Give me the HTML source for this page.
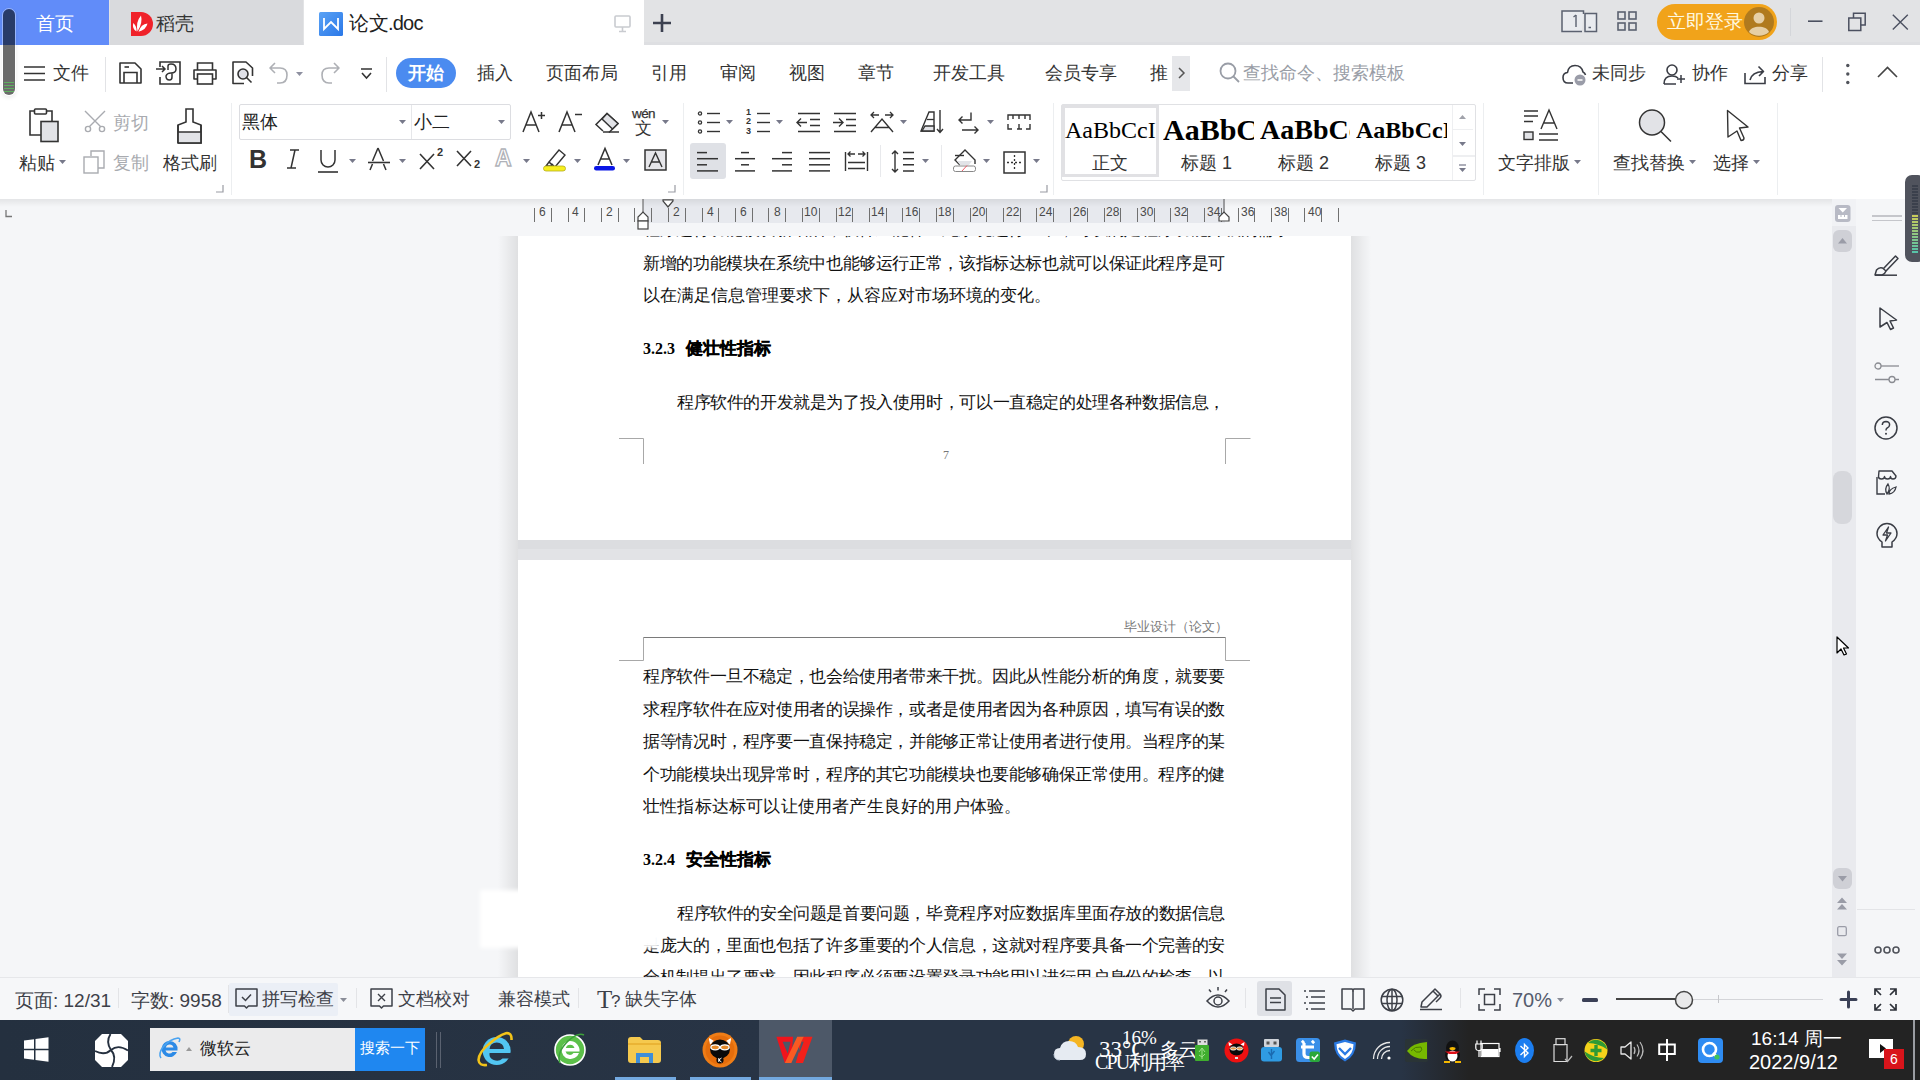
<!DOCTYPE html>
<html><head><meta charset="utf-8"><style>
*{box-sizing:border-box;margin:0;padding:0}
html,body{width:1920px;height:1080px;overflow:hidden;background:#f3f4f7;font-family:"Liberation Sans",sans-serif;color:#333}
.a{position:absolute}
.t{position:absolute;white-space:nowrap;line-height:1}
svg{position:absolute;overflow:visible}
</style></head><body>
<div class="a" style="left:0px;top:0px;width:1920px;height:45px;background:#e2e3e5;"></div>
<div class="a" style="left:0px;top:42px;width:1920px;height:3px;background:#dedfe2;"></div>
<div class="a" style="left:0px;top:0px;width:109px;height:45px;background:#618cf9;"></div>
<div class="t" style="left:36px;top:15px;font-size:18.5px;color:#fff;font-weight:normal;">首页</div>
<div class="a" style="left:110px;top:0px;width:193px;height:45px;background:#d9dadd;"></div>
<svg style="left:129px;top:12px;" width="24" height="24" viewBox="0 0 24 24"><path d="M2 0 H12 A12 12 0 0 1 12 24 H2 Z" fill="#f0222a"/><path d="M8.5 19.5 Q6.5 10 12 3.5 Q14 11 8.5 19.5 Z M7.5 19.5 Q3 17 4.2 11 Q8 14 7.5 19.5 Z M9.5 19.8 Q12 12 18.5 11.5 Q17 18 9.5 19.8 Z" fill="#fff"/></svg>
<div class="t" style="left:156px;top:15px;font-size:18.5px;color:#333;font-weight:normal;">稻壳</div>
<div class="a" style="left:304px;top:0px;width:340px;height:45px;background:#fff;"></div>
<svg style="left:319px;top:12px;" width="24" height="24" viewBox="0 0 24 24"><defs><linearGradient id="wg" x1="0" y1="0" x2="1" y2="1"><stop offset="0" stop-color="#5aa2f5"/><stop offset="1" stop-color="#2a78e8"/></linearGradient></defs><rect width="24" height="24" rx="1.5" fill="url(#wg)"/><path d="M5 6 V17 L12 10 L19 17 V6" fill="none" stroke="#fff" stroke-width="1.8"/></svg>
<div class="t" style="left:349px;top:13px;font-size:20px;color:#222;font-weight:normal;letter-spacing:-0.5px">论文<span style="letter-spacing:-0.8px">.doc</span></div>
<svg style="left:614px;top:15px;" width="18" height="18" viewBox="0 0 18 18"><rect x="1" y="1" width="15" height="11" rx="1" fill="none" stroke="#c9cbd0" stroke-width="1.6"/><path d="M8.5 12 V16 M5 16.5 H12" stroke="#c9cbd0" stroke-width="1.6"/></svg>
<svg style="left:652px;top:13px;" width="20" height="20" viewBox="0 0 20 20"><path d="M10 1 V19 M1 10 H19" stroke="#3c4150" stroke-width="2.6"/></svg>
<svg style="left:1561px;top:10px;" width="37" height="23" viewBox="0 0 37 23"><path d="M21 21.5 H1 V1 H22.5 V4" fill="#e9ebef" stroke="#5b6170" stroke-width="1.5"/><rect x="24" y="3.5" width="11.5" height="18" fill="#e9ebef" stroke="#5b6170" stroke-width="1.5"/><path d="M15 5 V17" stroke="#5b6170" stroke-width="1.4" fill="none"/><path d="M12.5 7 L15 5" stroke="#5b6170" stroke-width="1.2"/><path d="M27.5 17.5 H30" stroke="#5b6170" stroke-width="1.5"/></svg>
<svg style="left:1617px;top:11px;" width="21" height="21" viewBox="0 0 21 21"><rect x="1" y="1" width="7" height="7" fill="none" stroke="#5b6170" stroke-width="1.6"/><rect x="12" y="1" width="7" height="7" fill="none" stroke="#5b6170" stroke-width="1.6"/><rect x="1" y="12" width="7" height="7" fill="none" stroke="#5b6170" stroke-width="1.6"/><rect x="12" y="12" width="7" height="7" fill="none" stroke="#5b6170" stroke-width="1.6"/></svg>
<div class="a" style="left:1657px;top:4px;width:120px;height:36px;background:#f1a31a;border-radius:18px"></div>
<div class="t" style="left:1667px;top:13px;font-size:18.5px;color:#fff9e0;font-weight:normal;">立即登录</div>
<svg style="left:1744px;top:7px;" width="30" height="30" viewBox="0 0 30 30"><circle cx="15" cy="15" r="15" fill="#b07a1e"/><circle cx="15" cy="11" r="5.5" fill="#e6cfa6"/><path d="M5 25 C7 18 23 18 25 25 A15 15 0 0 1 5 25Z" fill="#e6cfa6"/></svg>
<div class="a" style="left:1790px;top:8px;width:1px;height:28px;background:#d4d6da;"></div>
<svg style="left:1808px;top:20px;" width="16" height="3" viewBox="0 0 16 3"><path d="M0 1.2 H14.5" stroke="#4b5060" stroke-width="1.6"/></svg>
<svg style="left:1848px;top:12px;" width="20" height="20" viewBox="0 0 20 20"><rect x="0.8" y="6" width="12" height="12.5" fill="none" stroke="#4b5060" stroke-width="1.5"/><path d="M5.5 6 V1.2 H17.2 V13 H12.8" fill="none" stroke="#4b5060" stroke-width="1.5"/></svg>
<svg style="left:1892px;top:14px;" width="17" height="17" viewBox="0 0 17 17"><path d="M0.8 0.8 L15.8 15.5 M15.8 0.8 L0.8 15.5" stroke="#4b5060" stroke-width="1.4"/></svg>
<div class="a" style="left:0px;top:45px;width:1920px;height:55px;background:#fff;"></div>
<svg style="left:24px;top:66px;" width="22" height="16" viewBox="0 0 22 16"><path d="M0 1 H21 M0 7.5 H21 M0 14 H21" stroke="#333" stroke-width="1.6"/></svg>
<div class="t" style="left:53px;top:64px;font-size:18px;color:#333;font-weight:normal;">文件</div>
<div class="a" style="left:105px;top:57px;width:1px;height:35px;background:#e2e3e6;"></div>
<div class="t" style="left:396px;top:0px;font-size:1px;color:#333;font-weight:normal;"></div>
<div class="a" style="left:396px;top:58px;width:60px;height:30px;background:#4b8bf0;border-radius:15px"></div>
<div class="t" style="left:408px;top:64px;font-size:18px;color:#fff;font-weight:bold;">开始</div>
<div class="t" style="left:477px;top:64px;font-size:18px;color:#333;font-weight:normal;">插入</div>
<div class="t" style="left:546px;top:64px;font-size:18px;color:#333;font-weight:normal;">页面布局</div>
<div class="t" style="left:651px;top:64px;font-size:18px;color:#333;font-weight:normal;">引用</div>
<div class="t" style="left:720px;top:64px;font-size:18px;color:#333;font-weight:normal;">审阅</div>
<div class="t" style="left:789px;top:64px;font-size:18px;color:#333;font-weight:normal;">视图</div>
<div class="t" style="left:858px;top:64px;font-size:18px;color:#333;font-weight:normal;">章节</div>
<div class="t" style="left:933px;top:64px;font-size:18px;color:#333;font-weight:normal;">开发工具</div>
<div class="t" style="left:1045px;top:64px;font-size:18px;color:#333;font-weight:normal;">会员专享</div>
<div class="t" style="left:1150px;top:64px;font-size:18px;color:#333;font-weight:normal;">推</div>
<div class="a" style="left:1172px;top:56px;width:18px;height:35px;background:#e6e7ea;"></div>
<svg style="left:1178px;top:67px;" width="8" height="12" viewBox="0 0 8 12"><path d="M1 1 L6 6 L1 11" fill="none" stroke="#555" stroke-width="1.5"/></svg>
<svg style="left:1219px;top:62px;" width="22" height="22" viewBox="0 0 22 22"><circle cx="9" cy="9" r="7.5" fill="none" stroke="#999da6" stroke-width="1.8"/><path d="M14.5 14.5 L20 20" stroke="#999da6" stroke-width="1.8"/></svg>
<div class="t" style="left:1243px;top:64px;font-size:18px;color:#999da6;font-weight:normal;">查找命令、搜索模板</div>
<div class="t" style="left:1592px;top:64px;font-size:18px;color:#333;font-weight:normal;">未同步</div>
<div class="t" style="left:1692px;top:64px;font-size:18px;color:#333;font-weight:normal;">协作</div>
<div class="t" style="left:1772px;top:64px;font-size:18px;color:#333;font-weight:normal;">分享</div>
<div class="a" style="left:1822px;top:57px;width:1px;height:35px;background:#e2e3e6;"></div>
<svg style="left:119px;top:62px;" width="23" height="22" viewBox="0 0 23 22"><path d="M1 1 H16 L22 7 V21 H1 Z" fill="none" stroke="#333" stroke-width="1.6" stroke-linejoin="round"/><path d="M5 21 V10.5 H18 V21" fill="none" stroke="#333" stroke-width="1.6"/><path d="M5.5 5 H10" stroke="#333" stroke-width="1.6"/></svg>
<svg style="left:156px;top:61px;" width="25" height="24" viewBox="0 0 25 24"><path d="M4 6 V1 H24 V23 H4 V16" fill="none" stroke="#333" stroke-width="1.6"/><path d="M0 8 H9 M6 5 L9 8 L6 11" fill="none" stroke="#333" stroke-width="1.5"/><path d="M12 9 V5 Q12 3 15 3 Q20 3 20 8 Q20 12 15 12 Q11 12 10 15 Q10 19 13.5 19 Q16 19 16 16 V12" fill="none" stroke="#333" stroke-width="1.5"/></svg>
<svg style="left:193px;top:62px;" width="24" height="23" viewBox="0 0 24 23"><path d="M4.5 8 V1 H19.5 V8" fill="none" stroke="#333" stroke-width="1.6"/><path d="M4.5 17 H1 V8 H23 V17 H19.5" fill="none" stroke="#333" stroke-width="1.6" stroke-linejoin="round"/><rect x="4.5" y="12" width="15" height="10" fill="#fff" stroke="#333" stroke-width="1.6"/></svg>
<svg style="left:232px;top:61px;" width="22" height="24" viewBox="0 0 22 24"><path d="M12 22.5 H1 V1 H14 L20.5 7 V15" fill="none" stroke="#333" stroke-width="1.6" stroke-linejoin="round"/><circle cx="11" cy="13" r="5" fill="#e0e1e8" stroke="#333" stroke-width="1.6"/><path d="M14.5 16.5 L19.5 21.5" stroke="#333" stroke-width="1.6"/></svg>
<svg style="left:268px;top:62px;" width="21" height="22" viewBox="0 0 21 22"><path d="M9 21 H12 Q19 21 19 13 Q19 6 12 6 H2 M7 1 L2 6 L7 11" fill="none" stroke="#aeb0b5" stroke-width="1.6" stroke-linejoin="round"/></svg>
<svg style="left:296px;top:72px;" width="8" height="4" viewBox="0 0 8 4"><path d="M0 0 H7 L3.5 4Z" fill="#8e90a0"/></svg>
<svg style="left:320px;top:62px;" width="21" height="22" viewBox="0 0 21 22"><path d="M12 21 H9 Q2 21 2 13 Q2 6 9 6 H19 M14 1 L19 6 L14 11" fill="none" stroke="#aeb0b5" stroke-width="1.6" stroke-linejoin="round"/></svg>
<svg style="left:360px;top:68px;" width="13" height="12" viewBox="0 0 13 12"><path d="M1 1 H12 M2 5 L6.5 10 L11 5" fill="none" stroke="#333" stroke-width="1.6"/></svg>
<div class="a" style="left:386px;top:57px;width:1px;height:35px;background:#e2e3e6;"></div>
<svg style="left:1562px;top:64px;" width="26" height="22" viewBox="0 0 26 22"><path d="M11 19 H6 Q1 19 1 13.5 Q1 9 5.5 8.5 Q6.5 1.5 13 1.5 Q19.5 1.5 21 8 Q23 9 23.5 11" fill="none" stroke="#3a3d45" stroke-width="1.6" stroke-linejoin="round"/><circle cx="18" cy="16" r="5.5" fill="#9a9ca8"/><path d="M15.5 16 H20.5" stroke="#fff" stroke-width="1.5"/></svg>
<svg style="left:1663px;top:64px;" width="23" height="21" viewBox="0 0 23 21"><circle cx="9" cy="6" r="5" fill="none" stroke="#3a3d45" stroke-width="1.6"/><path d="M1 20 Q1 12 9 12 Q13 12 15 14 M1 20 H13" fill="none" stroke="#3a3d45" stroke-width="1.6"/><path d="M18 11 V19 M14 15 H22" stroke="#3a3d45" stroke-width="1.5"/></svg>
<svg style="left:1744px;top:65px;" width="24" height="20" viewBox="0 0 24 20"><path d="M1 8 V18.5 H21 V12" fill="none" stroke="#3a3d45" stroke-width="1.6"/><path d="M6 15 Q8 7 19 6.5 M14.5 1.5 L19.5 6.5 L15 11" fill="none" stroke="#3a3d45" stroke-width="1.6" stroke-linejoin="round"/></svg>
<svg style="left:1845px;top:63px;" width="6" height="22" viewBox="0 0 6 22"><circle cx="2.8" cy="2.5" r="1.7" fill="#50535b"/><circle cx="2.8" cy="11" r="1.7" fill="#50535b"/><circle cx="2.8" cy="19.5" r="1.7" fill="#50535b"/></svg>
<svg style="left:1877px;top:66px;" width="21" height="12" viewBox="0 0 21 12"><path d="M1 11 L10.5 1.5 L20 11" fill="none" stroke="#444" stroke-width="1.6"/></svg>
<div class="a" style="left:0px;top:100px;width:1920px;height:99px;background:#fff;"></div>
<svg style="left:28px;top:108px;" width="32" height="35" viewBox="0 0 32 35"><path d="M13 27 H2 V3 H6" fill="none" stroke="#333" stroke-width="1.6"/><path d="M19 3 H24 V13" fill="none" stroke="#333" stroke-width="1.6"/><rect x="6.5" y="1" width="12" height="5" rx="1" fill="none" stroke="#333" stroke-width="1.6"/><rect x="13" y="13.5" width="17" height="20" fill="#e2e3e7" stroke="#333" stroke-width="1.6"/></svg>
<div class="t" style="left:19px;top:154px;font-size:18px;color:#333;font-weight:normal;">粘贴</div>
<svg style="left:59px;top:160px;" width="8" height="4" viewBox="0 0 8 4"><path d="M0 0 H7 L3.5 4Z" fill="#77798a"/></svg>
<svg style="left:83px;top:110px;" width="25" height="23" viewBox="0 0 25 23"><path d="M2 1 L18 17 M22 1 L6 17" stroke="#a9abb0" stroke-width="1.4"/><circle cx="5" cy="19" r="2.6" fill="#fff" stroke="#a9abb0" stroke-width="1.4"/><circle cx="19" cy="19" r="2.6" fill="#fff" stroke="#a9abb0" stroke-width="1.4"/></svg>
<div class="t" style="left:113px;top:114px;font-size:18px;color:#a9abb0;font-weight:normal;">剪切</div>
<svg style="left:83px;top:150px;" width="23" height="24" viewBox="0 0 23 24"><path d="M8 6 V1 H21 V18 H15" fill="none" stroke="#a9abb0" stroke-width="1.4"/><rect x="1" y="7" width="14" height="16" fill="none" stroke="#a9abb0" stroke-width="1.4"/></svg>
<div class="t" style="left:113px;top:154px;font-size:18px;color:#a9abb0;font-weight:normal;">复制</div>
<svg style="left:176px;top:108px;" width="28" height="36" viewBox="0 0 28 36"><path d="M10 1 H17 V14 L25 17 V35 H2 V17 L10 14 Z" fill="none" stroke="#333" stroke-width="1.6"/><rect x="2.5" y="24" width="22" height="10.5" fill="#e2e3e7"/><path d="M2 24 H25 M2 35 H25 V17 M2 17 V35" fill="none" stroke="#333" stroke-width="1.6"/></svg>
<div class="t" style="left:163px;top:154px;font-size:18px;color:#333;font-weight:normal;">格式刷</div>
<svg style="left:216px;top:185px;" width="8" height="8" viewBox="0 0 8 8"><path d="M7 0 V7 H0" fill="none" stroke="#9a9ca3" stroke-width="1.2"/></svg>
<div class="a" style="left:231px;top:103px;width:1px;height:92px;background:#eceef0;"></div>
<div class="a" style="left:239px;top:104px;width:272px;height:36px;background:#fff;border:1px solid #dcdde1;border-radius:2px"></div>
<div class="a" style="left:411px;top:105px;width:1px;height:34px;background:#e6e7ea;"></div>
<div class="t" style="left:242px;top:113px;font-size:18px;color:#222;font-weight:normal;">黑体</div>
<svg style="left:399px;top:120px;" width="8" height="4" viewBox="0 0 8 4"><path d="M0 0 H7 L3.5 4Z" fill="#77798a"/></svg>
<div class="t" style="left:414px;top:113px;font-size:18px;color:#222;font-weight:normal;">小二</div>
<svg style="left:498px;top:120px;" width="8" height="4" viewBox="0 0 8 4"><path d="M0 0 H7 L3.5 4Z" fill="#77798a"/></svg>
<svg style="left:522px;top:111px;" width="24" height="22" viewBox="0 0 24 22"><path d="M1 21 L9 1 L17 21 M4 14 H14" fill="none" stroke="#333" stroke-width="1.5"/><path d="M16 4.5 H23 M19.5 1 V8" stroke="#333" stroke-width="1.5"/></svg>
<svg style="left:558px;top:111px;" width="25" height="22" viewBox="0 0 25 22"><path d="M1 21 L9 1 L17 21 M4 14 H14" fill="none" stroke="#333" stroke-width="1.5"/><path d="M17 3.5 H24" stroke="#333" stroke-width="1.5"/></svg>
<svg style="left:595px;top:112px;" width="25" height="21" viewBox="0 0 25 21"><path d="M8 19 L1 12.5 L12 1.5 L23 11.5 L14 20.5" fill="#fff" stroke="#333" stroke-width="1.5"/><path d="M7 7 L12 1.5 L23 11.5 L17.5 17 Z" fill="#e2e3e7" stroke="#333" stroke-width="1.5"/><path d="M8 20 H24" stroke="#333" stroke-width="1.5"/></svg>
<div class="t" style="left:632px;top:107px;font-size:13.5px;color:#333;font-weight:normal;letter-spacing:-0.6px;-webkit-text-stroke:0.25px #333">wén</div>
<div class="t" style="left:635px;top:120px;font-size:17px;color:#333;font-weight:normal;">文</div>
<svg style="left:662px;top:120px;" width="8" height="4" viewBox="0 0 8 4"><path d="M0 0 H7 L3.5 4Z" fill="#77798a"/></svg>
<div class="t" style="left:249px;top:147px;font-size:25px;color:#333;font-weight:bold;">B</div>
<svg style="left:286px;top:149px;" width="14" height="20" viewBox="0 0 14 20"><path d="M4 1 H13 M1 19 H10 M9 1 L5 19" stroke="#333" stroke-width="1.5"/></svg>
<svg style="left:318px;top:149px;" width="24" height="24" viewBox="0 0 24 24"><path d="M3 1 V11 A7 7 0 0 0 17 11 V1" fill="none" stroke="#333" stroke-width="1.5"/><path d="M0 23 H20" stroke="#333" stroke-width="1.6"/></svg>
<svg style="left:349px;top:159px;" width="8" height="4" viewBox="0 0 8 4"><path d="M0 0 H7 L3.5 4Z" fill="#77798a"/></svg>
<svg style="left:368px;top:147px;" width="24" height="24" viewBox="0 0 24 24"><path d="M2 23 L4.5 17 M10 1 L4.5 14 M10 1 L15.5 14 M15.5 17 L18 23" fill="none" stroke="#333" stroke-width="1.5"/><path d="M0 15.5 H22" stroke="#333" stroke-width="1.6"/></svg>
<svg style="left:399px;top:159px;" width="8" height="4" viewBox="0 0 8 4"><path d="M0 0 H7 L3.5 4Z" fill="#77798a"/></svg>
<svg style="left:419px;top:148px;" width="26" height="22" viewBox="0 0 26 22"><path d="M1 6 L15 21 M15 6 L1 21" stroke="#333" stroke-width="1.6"/></svg>
<div class="t" style="left:437px;top:147px;font-size:11px;color:#333;font-weight:bold;">2</div>
<svg style="left:456px;top:148px;" width="26" height="22" viewBox="0 0 26 22"><path d="M1 3 L15 18 M15 3 L1 18" stroke="#333" stroke-width="1.6"/></svg>
<div class="t" style="left:474px;top:159px;font-size:11px;color:#333;font-weight:bold;">2</div>
<div class="t" style="left:495px;top:147px;font-size:23px;color:#fff;font-weight:bold;-webkit-text-stroke:1.3px #b0b2b8">A</div>
<svg style="left:523px;top:159px;" width="8" height="4" viewBox="0 0 8 4"><path d="M0 0 H7 L3.5 4Z" fill="#77798a"/></svg>
<svg style="left:543px;top:148px;" width="24" height="23" viewBox="0 0 24 23"><path d="M6 14 L16 2 L22 7 L12 19 Z M6 14 L9 17 M6 14 L3 18 L8 18 L10 16" fill="#fff" stroke="#333" stroke-width="1.4"/><rect x="0.5" y="18" width="22" height="5" rx="2.5" fill="#f7ef1c" stroke="#b5ad20" stroke-width="0.8"/></svg>
<svg style="left:574px;top:159px;" width="8" height="4" viewBox="0 0 8 4"><path d="M0 0 H7 L3.5 4Z" fill="#77798a"/></svg>
<svg style="left:594px;top:148px;" width="22" height="23" viewBox="0 0 22 23"><path d="M4 17 L11 0.5 L18 17 M6.5 11 H15.5" fill="none" stroke="#333" stroke-width="1.5"/><rect x="0" y="18" width="21" height="4.5" rx="2.2" fill="#0a16e6"/></svg>
<svg style="left:623px;top:159px;" width="8" height="4" viewBox="0 0 8 4"><path d="M0 0 H7 L3.5 4Z" fill="#77798a"/></svg>
<svg style="left:644px;top:149px;" width="23" height="22" viewBox="0 0 23 22"><rect x="1" y="1" width="21" height="20" fill="#e6e6ea" stroke="#333" stroke-width="1.5"/><path d="M5 18 L11.5 4 L18 18 M7.5 13 H15.5" fill="none" stroke="#333" stroke-width="1.4"/></svg>
<svg style="left:668px;top:185px;" width="8" height="8" viewBox="0 0 8 8"><path d="M7 0 V7 H0" fill="none" stroke="#9a9ca3" stroke-width="1.2"/></svg>
<div class="a" style="left:683px;top:103px;width:1px;height:92px;background:#eceef0;"></div>
<svg style="left:697px;top:110px;" width="26" height="26" viewBox="0 0 26 26"><circle cx="3" cy="3.5" r="1.6" fill="none" stroke="#333" stroke-width="1.3"/><path d="M10 3.5 H23" stroke="#333" stroke-width="1.4"/><circle cx="3" cy="12.5" r="1.6" fill="none" stroke="#333" stroke-width="1.3"/><path d="M10 12.5 H23" stroke="#333" stroke-width="1.4"/><circle cx="3" cy="21.5" r="1.6" fill="none" stroke="#333" stroke-width="1.3"/><path d="M10 21.5 H23" stroke="#333" stroke-width="1.4"/></svg>
<svg style="left:726px;top:120px;" width="8" height="4" viewBox="0 0 8 4"><path d="M0 0 H7 L3.5 4Z" fill="#77798a"/></svg>
<div class="t" style="left:746px;top:108px;font-size:9px;color:#333;font-weight:bold;line-height:9.3px">1<br>2<br>3</div>
<svg style="left:756px;top:110px;" width="16" height="26" viewBox="0 0 16 26"><path d="M1 3.5 H14" stroke="#333" stroke-width="1.4"/><path d="M1 12.5 H14" stroke="#333" stroke-width="1.4"/><path d="M1 21.5 H14" stroke="#333" stroke-width="1.4"/></svg>
<svg style="left:776px;top:120px;" width="8" height="4" viewBox="0 0 8 4"><path d="M0 0 H7 L3.5 4Z" fill="#77798a"/></svg>
<svg style="left:796px;top:112px;" width="26" height="22" viewBox="0 0 26 22"><path d="M2 1.5 H24 M14 7.5 H24 M14 13.5 H24 M2 19.5 H24" stroke="#333" stroke-width="1.4"/><path d="M11 10.5 H1 M5 6.5 L1 10.5 L5 14.5" fill="none" stroke="#333" stroke-width="1.4"/></svg>
<svg style="left:833px;top:112px;" width="26" height="22" viewBox="0 0 26 22"><path d="M1 1.5 H23 M13 7.5 H23 M13 13.5 H23 M1 19.5 H23" stroke="#333" stroke-width="1.4"/><path d="M0 10.5 H10 M6 6.5 L10 10.5 L6 14.5" fill="none" stroke="#333" stroke-width="1.4"/></svg>
<svg style="left:870px;top:111px;" width="25" height="22" viewBox="0 0 25 22"><path d="M1 21 L12 8 L23 21 M5 16.5 H19" fill="none" stroke="#333" stroke-width="1.4"/><path d="M1 4 H9 M4 1 L1 4 L4 7 M15 4 H23 M20 1 L23 4 L20 7" fill="none" stroke="#333" stroke-width="1.3"/></svg>
<svg style="left:900px;top:120px;" width="8" height="4" viewBox="0 0 8 4"><path d="M0 0 H7 L3.5 4Z" fill="#77798a"/></svg>
<svg style="left:920px;top:110px;" width="25" height="24" viewBox="0 0 25 24"><path d="M1 21 L9 2 H14 V21 Z" fill="none" stroke="#333" stroke-width="1.4"/><path d="M5 16 H14 V21 H2 Z" fill="#e2e3e7" stroke="#333" stroke-width="1.3"/><path d="M7 9.5 H14" stroke="#333" stroke-width="1.3"/><path d="M20 0 V22 M17 19 L20 22.5 L23 19" fill="none" stroke="#333" stroke-width="1.4"/></svg>
<svg style="left:958px;top:112px;" width="23" height="22" viewBox="0 0 23 22"><path d="M13 0.5 V8 H1 M4.5 4.5 L1 8 L4.5 11.5" fill="none" stroke="#333" stroke-width="1.4"/><path d="M4 18 H20 M16.5 14.5 L20 18 L16.5 21.5" fill="none" stroke="#333" stroke-width="1.4"/></svg>
<svg style="left:987px;top:120px;" width="8" height="4" viewBox="0 0 8 4"><path d="M0 0 H7 L3.5 4Z" fill="#77798a"/></svg>
<svg style="left:1007px;top:114px;" width="25" height="16" viewBox="0 0 25 16"><path d="M1 6 V1 H23 V6 M1 10 V15 H5 M10 15 H15 M19 15 H23 V10 M12 10 V15 M6 1 V5 M12 1 V5 M18 1 V5" fill="none" stroke="#333" stroke-width="1.4"/></svg>
<div class="a" style="left:690px;top:143px;width:36px;height:36px;background:#dfe1e6;border-radius:3px"></div>
<svg style="left:697px;top:150px;" width="23" height="24" viewBox="0 0 23 24"><path d="M0 2.6 H10" stroke="#333" stroke-width="1.5"/><path d="M0 8.7 H21" stroke="#333" stroke-width="1.5"/><path d="M0 14.799999999999999 H10" stroke="#333" stroke-width="1.5"/><path d="M0 20.9 H21" stroke="#333" stroke-width="1.5"/></svg>
<svg style="left:735px;top:150px;" width="23" height="24" viewBox="0 0 23 24"><path d="M6 2.6 H14" stroke="#333" stroke-width="1.5"/><path d="M0 8.7 H20" stroke="#333" stroke-width="1.5"/><path d="M6 14.799999999999999 H14" stroke="#333" stroke-width="1.5"/><path d="M0 20.9 H20" stroke="#333" stroke-width="1.5"/></svg>
<svg style="left:772px;top:150px;" width="23" height="24" viewBox="0 0 23 24"><path d="M10 2.6 H20" stroke="#333" stroke-width="1.5"/><path d="M0 8.7 H20" stroke="#333" stroke-width="1.5"/><path d="M10 14.799999999999999 H20" stroke="#333" stroke-width="1.5"/><path d="M0 20.9 H20" stroke="#333" stroke-width="1.5"/></svg>
<svg style="left:809px;top:150px;" width="23" height="24" viewBox="0 0 23 24"><path d="M0 2.6 H21" stroke="#333" stroke-width="1.5"/><path d="M0 8.7 H21" stroke="#333" stroke-width="1.5"/><path d="M0 14.799999999999999 H21" stroke="#333" stroke-width="1.5"/><path d="M0 20.9 H21" stroke="#333" stroke-width="1.5"/></svg>
<svg style="left:844px;top:150px;" width="26" height="23" viewBox="0 0 26 23"><path d="M1.5 2 V21 M23.5 2 V21 M4 12.5 H21 M4 18.5 H21" stroke="#333" stroke-width="1.4"/><path d="M4 4 H11 M6.5 1.5 L4 4 L6.5 6.5 M14 4 H21 M18.5 1.5 L21 4 L18.5 6.5" fill="none" stroke="#333" stroke-width="1.3"/></svg>
<div class="a" style="left:880px;top:145px;width:1px;height:32px;background:#e8e9ec;"></div>
<svg style="left:891px;top:150px;" width="25" height="24" viewBox="0 0 25 24"><path d="M4 1 V22 M1 4 L4 1 L7 4 M1 19 L4 22 L7 19" fill="none" stroke="#333" stroke-width="1.4"/><path d="M12 2.6 H23 M12 8.7 H23 M12 14.8 H23 M12 20.9 H23" stroke="#333" stroke-width="1.5"/></svg>
<svg style="left:922px;top:159px;" width="8" height="4" viewBox="0 0 8 4"><path d="M0 0 H7 L3.5 4Z" fill="#77798a"/></svg>
<div class="a" style="left:941px;top:145px;width:1px;height:32px;background:#e8e9ec;"></div>
<svg style="left:953px;top:149px;" width="24" height="24" viewBox="0 0 24 24"><path d="M7 16 L2 11 L12 1 L22 11 V15" fill="none" stroke="#333" stroke-width="1.4"/><path d="M4 12 L7 16 H16 L19 12 Z" fill="#e2e3e7"/><path d="M2 6.5 H11" stroke="#333" stroke-width="1.4"/><rect x="0.5" y="17" width="22" height="5.5" rx="2" fill="#fff" stroke="#888" stroke-width="1"/><path d="M9 22 L14 16.5" stroke="#e34" stroke-width="0.8"/></svg>
<svg style="left:983px;top:159px;" width="8" height="4" viewBox="0 0 8 4"><path d="M0 0 H7 L3.5 4Z" fill="#77798a"/></svg>
<svg style="left:1003px;top:151px;" width="23" height="23" viewBox="0 0 23 23"><rect x="1" y="1" width="21" height="21" fill="none" stroke="#333" stroke-width="1.5"/><path d="M11.5 4 V19 M4 11.5 H19" stroke="#333" stroke-width="1.3" stroke-dasharray="2 2"/></svg>
<svg style="left:1033px;top:159px;" width="8" height="4" viewBox="0 0 8 4"><path d="M0 0 H7 L3.5 4Z" fill="#77798a"/></svg>
<svg style="left:1040px;top:185px;" width="8" height="8" viewBox="0 0 8 8"><path d="M7 0 V7 H0" fill="none" stroke="#9a9ca3" stroke-width="1.2"/></svg>
<div class="a" style="left:1053px;top:103px;width:1px;height:92px;background:#eceef0;"></div>
<div class="a" style="left:1061px;top:104px;width:415px;height:77px;background:#fff;border:1px solid #e0e1e4;border-radius:2px"></div>
<div class="a" style="left:1062px;top:105px;width:97px;height:72px;background:#fff;border:3px solid #e1e1e4"></div>
<div class="a" style="left:1065px;top:112px;width:92px;height:34px;overflow:hidden"><div class="t" style="left:0;top:5.5px;font-family:'Liberation Serif',serif;font-size:24px;color:#000">AaBbCcI</div></div>
<div class="t" style="left:1092px;top:154px;font-size:18px;color:#333;font-weight:normal;">正文</div>
<div class="a" style="left:1163px;top:110px;width:91px;height:38px;overflow:hidden"><div class="t" style="left:0;top:5px;font-family:'Liberation Serif',serif;font-size:30px;font-weight:bold;color:#000">AaBbCc</div></div>
<div class="t" style="left:1181px;top:154px;font-size:18px;color:#333;font-weight:normal;">标题 1</div>
<div class="a" style="left:1260px;top:112px;width:90px;height:36px;overflow:hidden"><div class="t" style="left:0;top:4px;font-family:'Liberation Serif',serif;font-size:28px;font-weight:bold;color:#000">AaBbCc</div></div>
<div class="t" style="left:1278px;top:154px;font-size:18px;color:#333;font-weight:normal;">标题 2</div>
<div class="a" style="left:1356px;top:114px;width:91px;height:32px;overflow:hidden"><div class="t" style="left:0;top:4px;font-family:'Liberation Serif',serif;font-size:24px;font-weight:bold;color:#000">AaBbCcI</div></div>
<div class="t" style="left:1375px;top:154px;font-size:18px;color:#333;font-weight:normal;">标题 3</div>
<div class="a" style="left:1452px;top:105px;width:1px;height:75px;background:#eeeff1;"></div>
<div class="a" style="left:1453px;top:129px;width:20px;height:1px;background:#eeeff1;"></div>
<div class="a" style="left:1453px;top:155px;width:22px;height:2px;background:#eeeff1;"></div>
<svg style="left:1459px;top:115px;" width="8" height="4" viewBox="0 0 8 4"><path d="M0 4 H7 L3.5 0Z" fill="#a0a2aa"/></svg>
<svg style="left:1459px;top:142px;" width="8" height="4" viewBox="0 0 8 4"><path d="M0 0 H7 L3.5 4Z" fill="#77798a"/></svg>
<svg style="left:1459px;top:164px;" width="8" height="9" viewBox="0 0 8 9"><path d="M0 1 H7" stroke="#77798a" stroke-width="1.2"/><path d="M0 4 H7 L3.5 8Z" fill="#77798a"/></svg>
<div class="a" style="left:1483px;top:103px;width:1px;height:92px;background:#eceef0;"></div>
<svg style="left:1523px;top:109px;" width="36" height="33" viewBox="0 0 36 33"><path d="M1 2 H15 M1 7 H15 M1 12.5 H10" stroke="#333" stroke-width="1.4"/><path d="M18 20 L26 1 L34 20 M20.5 14 H31.5" fill="none" stroke="#333" stroke-width="1.4"/><rect x="1" y="23" width="9" height="7.5" fill="#e2e3e7" stroke="#333" stroke-width="1.4"/><path d="M16 25 H35 M16 31 H35" stroke="#333" stroke-width="1.4"/></svg>
<div class="t" style="left:1498px;top:154px;font-size:18px;color:#333;font-weight:normal;">文字排版</div>
<svg style="left:1574px;top:160px;" width="8" height="4" viewBox="0 0 8 4"><path d="M0 0 H7 L3.5 4Z" fill="#77798a"/></svg>
<div class="a" style="left:1598px;top:103px;width:1px;height:92px;background:#eceef0;"></div>
<svg style="left:1637px;top:108px;" width="36" height="36" viewBox="0 0 36 36"><circle cx="15" cy="14.5" r="12.5" fill="#e2e3e7" stroke="#333" stroke-width="1.5"/><path d="M24 23.5 L34 33.5" stroke="#333" stroke-width="1.5"/></svg>
<div class="t" style="left:1613px;top:154px;font-size:18px;color:#333;font-weight:normal;">查找替换</div>
<svg style="left:1689px;top:160px;" width="8" height="4" viewBox="0 0 8 4"><path d="M0 0 H7 L3.5 4Z" fill="#77798a"/></svg>
<svg style="left:1726px;top:109px;" width="25" height="34" viewBox="0 0 25 34"><path d="M1.5 1.5 L22 18 L13.5 19 L18 29 Q18 31.5 15 31.5 L11 22 L2 28 Z" fill="#fff" stroke="#333" stroke-width="1.4" stroke-linejoin="round"/></svg>
<div class="t" style="left:1713px;top:154px;font-size:18px;color:#333;font-weight:normal;">选择</div>
<svg style="left:1753px;top:160px;" width="8" height="4" viewBox="0 0 8 4"><path d="M0 0 H7 L3.5 4Z" fill="#77798a"/></svg>
<div class="a" style="left:1777px;top:103px;width:1px;height:92px;background:#eceef0;"></div>
<div class="a" style="left:0px;top:199px;width:1832px;height:779px;background:#f5f6f8;"></div>
<div class="a" style="left:643px;top:199px;width:582px;height:24px;background:#e7e9ee;"></div>
<div class="a" style="left:0;top:199px;width:1832px;height:8px;background:linear-gradient(rgba(0,0,0,0.07),rgba(245,246,248,0))"></div>
<svg style="left:5px;top:210px;" width="8" height="8" viewBox="0 0 8 8"><path d="M1 0 V6.5 H7" fill="none" stroke="#777" stroke-width="1.3"/></svg>
<svg style="left:0;top:199px" width="1832" height="35" viewBox="0 0 1832 35"><path d="M534.5 9 V23" stroke="#707070" stroke-width="1"/><path d="M551.5 9 V23" stroke="#707070" stroke-width="1"/><path d="M568.5 9 V23" stroke="#707070" stroke-width="1"/><path d="M584.5 9 V23" stroke="#707070" stroke-width="1"/><path d="M601.5 9 V23" stroke="#707070" stroke-width="1"/><path d="M618.5 9 V23" stroke="#707070" stroke-width="1"/><path d="M634.5 9 V23" stroke="#707070" stroke-width="1"/><path d="M651.5 9 V23" stroke="#707070" stroke-width="1"/><path d="M668.5 9 V23" stroke="#707070" stroke-width="1"/><path d="M685.5 9 V23" stroke="#707070" stroke-width="1"/><path d="M702.5 9 V23" stroke="#707070" stroke-width="1"/><path d="M718.5 9 V23" stroke="#707070" stroke-width="1"/><path d="M735.5 9 V23" stroke="#707070" stroke-width="1"/><path d="M752.5 9 V23" stroke="#707070" stroke-width="1"/><path d="M768.5 9 V23" stroke="#707070" stroke-width="1"/><path d="M785.5 9 V23" stroke="#707070" stroke-width="1"/><path d="M802.5 9 V23" stroke="#707070" stroke-width="1"/><path d="M819.5 9 V23" stroke="#707070" stroke-width="1"/><path d="M836.5 9 V23" stroke="#707070" stroke-width="1"/><path d="M852.5 9 V23" stroke="#707070" stroke-width="1"/><path d="M869.5 9 V23" stroke="#707070" stroke-width="1"/><path d="M886.5 9 V23" stroke="#707070" stroke-width="1"/><path d="M902.5 9 V23" stroke="#707070" stroke-width="1"/><path d="M919.5 9 V23" stroke="#707070" stroke-width="1"/><path d="M936.5 9 V23" stroke="#707070" stroke-width="1"/><path d="M953.5 9 V23" stroke="#707070" stroke-width="1"/><path d="M970.5 9 V23" stroke="#707070" stroke-width="1"/><path d="M986.5 9 V23" stroke="#707070" stroke-width="1"/><path d="M1003.5 9 V23" stroke="#707070" stroke-width="1"/><path d="M1020.5 9 V23" stroke="#707070" stroke-width="1"/><path d="M1036.5 9 V23" stroke="#707070" stroke-width="1"/><path d="M1053.5 9 V23" stroke="#707070" stroke-width="1"/><path d="M1070.5 9 V23" stroke="#707070" stroke-width="1"/><path d="M1087.5 9 V23" stroke="#707070" stroke-width="1"/><path d="M1104.5 9 V23" stroke="#707070" stroke-width="1"/><path d="M1120.5 9 V23" stroke="#707070" stroke-width="1"/><path d="M1137.5 9 V23" stroke="#707070" stroke-width="1"/><path d="M1154.5 9 V23" stroke="#707070" stroke-width="1"/><path d="M1170.5 9 V23" stroke="#707070" stroke-width="1"/><path d="M1187.5 9 V23" stroke="#707070" stroke-width="1"/><path d="M1204.5 9 V23" stroke="#707070" stroke-width="1"/><path d="M1221.5 9 V23" stroke="#707070" stroke-width="1"/><path d="M1238.5 9 V23" stroke="#707070" stroke-width="1"/><path d="M1254.5 9 V23" stroke="#707070" stroke-width="1"/><path d="M1271.5 9 V23" stroke="#707070" stroke-width="1"/><path d="M1288.5 9 V23" stroke="#707070" stroke-width="1"/><path d="M1304.5 9 V23" stroke="#707070" stroke-width="1"/><path d="M1321.5 9 V23" stroke="#707070" stroke-width="1"/><path d="M1338.5 9 V23" stroke="#707070" stroke-width="1"/></svg>
<div class="t" style="left:539px;top:206px;font-size:12px;color:#4a4a4a;font-weight:normal;">6</div>
<div class="t" style="left:572px;top:206px;font-size:12px;color:#4a4a4a;font-weight:normal;">4</div>
<div class="t" style="left:606px;top:206px;font-size:12px;color:#4a4a4a;font-weight:normal;">2</div>
<div class="t" style="left:673px;top:206px;font-size:12px;color:#4a4a4a;font-weight:normal;">2</div>
<div class="t" style="left:707px;top:206px;font-size:12px;color:#4a4a4a;font-weight:normal;">4</div>
<div class="t" style="left:740px;top:206px;font-size:12px;color:#4a4a4a;font-weight:normal;">6</div>
<div class="t" style="left:774px;top:206px;font-size:12px;color:#4a4a4a;font-weight:normal;">8</div>
<div class="t" style="left:804px;top:206px;font-size:12px;color:#4a4a4a;font-weight:normal;">10</div>
<div class="t" style="left:838px;top:206px;font-size:12px;color:#4a4a4a;font-weight:normal;">12</div>
<div class="t" style="left:871px;top:206px;font-size:12px;color:#4a4a4a;font-weight:normal;">14</div>
<div class="t" style="left:905px;top:206px;font-size:12px;color:#4a4a4a;font-weight:normal;">16</div>
<div class="t" style="left:938px;top:206px;font-size:12px;color:#4a4a4a;font-weight:normal;">18</div>
<div class="t" style="left:972px;top:206px;font-size:12px;color:#4a4a4a;font-weight:normal;">20</div>
<div class="t" style="left:1006px;top:206px;font-size:12px;color:#4a4a4a;font-weight:normal;">22</div>
<div class="t" style="left:1039px;top:206px;font-size:12px;color:#4a4a4a;font-weight:normal;">24</div>
<div class="t" style="left:1073px;top:206px;font-size:12px;color:#4a4a4a;font-weight:normal;">26</div>
<div class="t" style="left:1106px;top:206px;font-size:12px;color:#4a4a4a;font-weight:normal;">28</div>
<div class="t" style="left:1140px;top:206px;font-size:12px;color:#4a4a4a;font-weight:normal;">30</div>
<div class="t" style="left:1174px;top:206px;font-size:12px;color:#4a4a4a;font-weight:normal;">32</div>
<div class="t" style="left:1207px;top:206px;font-size:12px;color:#4a4a4a;font-weight:normal;">34</div>
<div class="t" style="left:1241px;top:206px;font-size:12px;color:#4a4a4a;font-weight:normal;">36</div>
<div class="t" style="left:1274px;top:206px;font-size:12px;color:#4a4a4a;font-weight:normal;">38</div>
<div class="t" style="left:1308px;top:206px;font-size:12px;color:#4a4a4a;font-weight:normal;">40</div>
<svg style="left:637px;top:199px;" width="14" height="33" viewBox="0 0 14 33"><path d="M6 0 V13" stroke="#555" stroke-width="1"/><path d="M1 22 V18 L6 13 L11 18 V22 Z" fill="#fff" stroke="#444" stroke-width="1.2"/><rect x="1" y="22" width="10" height="8" fill="#fff" stroke="#444" stroke-width="1.2"/></svg>
<svg style="left:662px;top:199px;" width="13" height="10" viewBox="0 0 13 10"><path d="M1 0.8 H11 V2 L6 8 L1 2 Z" fill="#fff" stroke="#444" stroke-width="1.2"/></svg>
<svg style="left:1218px;top:199px;" width="14" height="25" viewBox="0 0 14 25"><path d="M6 0 V13" stroke="#555" stroke-width="1"/><path d="M1 22 V18 L6 13 L11 18 V22 Z" fill="#fff" stroke="#444" stroke-width="1.2"/></svg>
<div class="a" style="left:498px;top:236px;width:20px;height:742px;background:linear-gradient(to right,rgba(0,0,0,0),rgba(0,0,0,0.09))"></div>
<div class="a" style="left:1351px;top:236px;width:20px;height:742px;background:linear-gradient(to left,rgba(0,0,0,0),rgba(0,0,0,0.09))"></div>
<div class="a" style="left:518px;top:236px;width:833px;height:304px;background:#fff;"></div>
<div class="a" style="left:518px;top:540px;width:833px;height:9px;background:#dcdde0;"></div>
<div class="a" style="left:518px;top:549px;width:833px;height:11px;background:#e2e3e6;"></div>
<div class="a" style="left:518px;top:560px;width:833px;height:418px;background:#fff;"></div>
<div class="a" style="left:518px;top:236px;width:833px;height:304px;overflow:hidden">
<div class="t" style="left:125px;top:-15px;width:582px;font-size:17px;color:#111;font-family:'Liberation Serif',serif;text-align:justify;text-align-last:justify;letter-spacing:-0.4px">程序运行功能模块新增后，软件应能保证此系统运行正常，可以满足程序功能升级的需求</div>
</div>
<div class="t" style="left:643px;top:255px;width:582px;font-size:17px;color:#111;font-weight:normal;letter-spacing:-0.4px;font-family:'Liberation Serif',serif;text-align:justify;text-align-last:justify;">新增的功能模块在系统中也能够运行正常，该指标达标也就可以保证此程序是可</div>
<div class="t" style="left:643px;top:287px;width:582px;font-size:17px;color:#111;font-weight:normal;letter-spacing:0px;font-family:'Liberation Serif',serif;">以在满足信息管理要求下，从容应对市场环境的变化。</div>
<div class="t" style="left:643px;top:341px;width:582px;font-size:16.5px;color:#000;font-weight:bold;letter-spacing:0px;font-family:'Liberation Serif',serif;"><span style="font-size:16px">3.2.3</span><span style="margin-left:10.5px;-webkit-text-stroke:0.3px #000">健壮性指标</span></div>
<div class="t" style="left:677px;top:394px;width:548px;font-size:17px;color:#111;font-weight:normal;letter-spacing:-0.4px;font-family:'Liberation Serif',serif;text-align:justify;text-align-last:justify;">程序软件的开发就是为了投入使用时，可以一直稳定的处理各种数据信息，</div>
<svg style="left:618px;top:437px;" width="28" height="28" viewBox="0 0 28 28"><path d="M1 1.5 H25.5 V27" fill="none" stroke="#a8a8a8" stroke-width="1"/></svg>
<svg style="left:1224px;top:437px;" width="28" height="28" viewBox="0 0 28 28"><path d="M26.5 1.5 H1.5 V27" fill="none" stroke="#a8a8a8" stroke-width="1"/></svg>
<div class="t" style="left:943px;top:449px;font-size:12px;color:#777;font-weight:normal;font-family:'Liberation Serif',serif;">7</div>
<div class="t" style="left:1124px;top:620px;font-size:13px;color:#7a7a7a;font-weight:normal;">毕业设计（论文）</div>
<div class="a" style="left:643px;top:637px;width:582px;height:1px;background:#7a7a7a;"></div>
<svg style="left:618px;top:637px;" width="28" height="25" viewBox="0 0 28 25"><path d="M25.5 0 V23.5 H1" fill="none" stroke="#a8a8a8" stroke-width="1"/></svg>
<svg style="left:1224px;top:637px;" width="28" height="25" viewBox="0 0 28 25"><path d="M1.5 0 V23.5 H26" fill="none" stroke="#a8a8a8" stroke-width="1"/></svg>
<div class="t" style="left:643px;top:668.0px;width:582px;font-size:17px;color:#111;font-weight:normal;letter-spacing:-0.4px;font-family:'Liberation Serif',serif;text-align:justify;text-align-last:justify;">程序软件一旦不稳定，也会给使用者带来干扰。因此从性能分析的角度，就要要</div>
<div class="t" style="left:643px;top:700.6px;width:582px;font-size:17px;color:#111;font-weight:normal;letter-spacing:-0.4px;font-family:'Liberation Serif',serif;text-align:justify;text-align-last:justify;">求程序软件在应对使用者的误操作，或者是使用者因为各种原因，填写有误的数</div>
<div class="t" style="left:643px;top:733.2px;width:582px;font-size:17px;color:#111;font-weight:normal;letter-spacing:-0.4px;font-family:'Liberation Serif',serif;text-align:justify;text-align-last:justify;">据等情况时，程序要一直保持稳定，并能够正常让使用者进行使用。当程序的某</div>
<div class="t" style="left:643px;top:765.8px;width:582px;font-size:17px;color:#111;font-weight:normal;letter-spacing:-0.4px;font-family:'Liberation Serif',serif;text-align:justify;text-align-last:justify;">个功能模块出现异常时，程序的其它功能模块也要能够确保正常使用。程序的健</div>
<div class="t" style="left:643px;top:798.4px;width:582px;font-size:17px;color:#111;font-weight:normal;letter-spacing:0.2px;font-family:'Liberation Serif',serif;">壮性指标达标可以让使用者产生良好的用户体验。</div>
<div class="t" style="left:643px;top:852px;width:582px;font-size:16.5px;color:#000;font-weight:bold;letter-spacing:0px;font-family:'Liberation Serif',serif;"><span style="font-size:16px">3.2.4</span><span style="margin-left:10.5px;-webkit-text-stroke:0.3px #000">安全性指标</span></div>
<div class="a" style="left:518px;top:560px;width:833px;height:418px;overflow:hidden">
<div class="t" style="left:159px;top:345px;width:548px;font-size:17px;color:#111;font-family:'Liberation Serif',serif;text-align:justify;text-align-last:justify;letter-spacing:-0.4px">程序软件的安全问题是首要问题，毕竟程序对应数据库里面存放的数据信息</div>
<div class="t" style="left:125px;top:377px;width:582px;font-size:17px;color:#111;font-family:'Liberation Serif',serif;text-align:justify;text-align-last:justify;letter-spacing:-0.4px">是庞大的，里面也包括了许多重要的个人信息，这就对程序要具备一个完善的安</div>
<div class="t" style="left:125px;top:409px;width:582px;font-size:17px;color:#111;font-family:'Liberation Serif',serif;text-align:justify;text-align-last:justify;letter-spacing:-0.4px">全机制提出了要求，因此程序必须要设置登录功能用以进行用户身份的检查，以</div>
</div>
<div class="a" style="left:480px;top:890px;width:180px;height:58px;background:#fff;filter:blur(2px)"></div>
<div class="a" style="left:1832px;top:199px;width:24px;height:779px;background:#e9eaee;"></div>
<div class="a" style="left:1832px;top:199px;width:24px;height:27px;background:#f1f2f5;"></div>
<div class="a" style="left:1856px;top:199px;width:64px;height:779px;background:#f5f6f8;"></div>
<svg style="left:1835px;top:205px;" width="16" height="17" viewBox="0 0 16 17"><rect x="0" y="0" width="15.5" height="17" rx="3" fill="#b8bac5"/><path d="M3.5 3 H12 L7.75 7.5 Z" fill="#fff"/><path d="M3 10 H12.5 V14 H3 Z" fill="#fff"/><path d="M6 10 V12 M9.5 10 V12" stroke="#b8bac5" stroke-width="1"/></svg>
<div class="a" style="left:1833px;top:230px;width:19px;height:22px;background:#cfd0d6;border-radius:6px"></div>
<svg style="left:1838px;top:238px;" width="9" height="6" viewBox="0 0 9 6"><path d="M0 5.5 H9 L4.5 0 Z" fill="#9a9ca7"/></svg>
<div class="a" style="left:1833px;top:471px;width:19px;height:53px;background:#d6d7dc;border-radius:8px"></div>
<div class="a" style="left:1833px;top:868px;width:19px;height:21px;background:#cfd0d6;border-radius:6px"></div>
<svg style="left:1838px;top:876px;" width="9" height="6" viewBox="0 0 9 6"><path d="M0 0 H9 L4.5 5.5 Z" fill="#9a9ca7"/></svg>
<svg style="left:1837px;top:897px;" width="11" height="13" viewBox="0 0 11 13"><path d="M0 6 H10 L5 0.5 Z M0 12.5 H10 L5 7 Z" fill="#9a9ca7"/></svg>
<svg style="left:1837px;top:926px;" width="10" height="11" viewBox="0 0 10 11"><rect x="0.7" y="0.7" width="8.6" height="9" rx="1.5" fill="none" stroke="#9a9ca7" stroke-width="1.3"/></svg>
<svg style="left:1837px;top:953px;" width="11" height="13" viewBox="0 0 11 13"><path d="M0 0.5 H10 L5 6 Z M0 7 H10 L5 12.5 Z" fill="#9a9ca7"/></svg>
<div class="a" style="left:1872px;top:215px;width:30px;height:1.5px;background:#c5c6cb;"></div>
<div class="a" style="left:1872px;top:219.5px;width:30px;height:1.5px;background:#c5c6cb;"></div>
<svg style="left:1874px;top:254px;" width="25" height="22" viewBox="0 0 25 22"><path d="M9.5 14.5 L21.5 2 L24 4.5 L12 17" fill="none" stroke="#3a3d45" stroke-width="1.5" stroke-linejoin="round"/><path d="M1 21 L2.5 16 Q5 13 8.5 14 L12 17 Q11 20 8 21 Z" fill="none" stroke="#3a3d45" stroke-width="1.5" stroke-linejoin="round"/><path d="M1 21.2 H23" stroke="#3a3d45" stroke-width="1.5"/></svg>
<svg style="left:1879px;top:307px;" width="19" height="24" viewBox="0 0 19 24"><path d="M1 1 L17.5 13 L11 14 L14.5 21 L11.5 22.5 L8 15.5 L1 20 Z" fill="none" stroke="#3a3d45" stroke-width="1.5" stroke-linejoin="round"/></svg>
<svg style="left:1874px;top:362px;" width="27" height="22" viewBox="0 0 27 22"><circle cx="4" cy="4" r="3" fill="none" stroke="#8a8c92" stroke-width="1.3"/><path d="M7 4 H25" stroke="#8a8c92" stroke-width="1.3"/><circle cx="18" cy="17.5" r="3" fill="none" stroke="#8a8c92" stroke-width="1.3"/><path d="M1 17.5 H15 M21 17.5 H25" stroke="#8a8c92" stroke-width="1.3"/></svg>
<svg style="left:1874px;top:416px;" width="24" height="24" viewBox="0 0 24 24"><circle cx="12" cy="12" r="11" fill="none" stroke="#3a3d45" stroke-width="1.5"/><path d="M8.3 9 Q8.5 5.5 12 5.5 Q15.7 5.6 15.6 9 Q15.5 11 12.8 12.3 Q12 12.8 12 14.5" fill="none" stroke="#3a3d45" stroke-width="1.5"/><circle cx="12" cy="17.8" r="1" fill="#3a3d45"/></svg>
<svg style="left:1874px;top:470px;" width="26" height="26" viewBox="0 0 26 26"><path d="M5 1 H18 L22 6 Q22 9 19 9 Q16.5 9 16.5 6.5 Q16.5 9 13.5 9 Q10.5 9 10.5 6.5 Q10.5 9 7.5 9 Q4.5 9 4.5 6.5 Z" fill="none" stroke="#3a3d45" stroke-width="1.4" stroke-linejoin="round"/><path d="M3 7 V24 H11" fill="none" stroke="#3a3d45" stroke-width="1.4"/><path d="M13 24 Q10 19 14 14 Q17 19 13 24 Z M15 24 Q15 19 22 17 Q21 23 15 24 Z" fill="none" stroke="#3a3d45" stroke-width="1.3"/></svg>
<svg style="left:1876px;top:523px;" width="22" height="26" viewBox="0 0 22 26"><path d="M6 19 Q1 15.5 1 10.5 A10 10 0 0 1 21 10.5 Q21 15.5 16 19 V24 H6 Z" fill="none" stroke="#3a3d45" stroke-width="1.5" stroke-linejoin="round"/><path d="M12.5 4 L7 12 H11.5 L9.5 18 L15 10 H10.5 Z" fill="none" stroke="#3a3d45" stroke-width="1.3" stroke-linejoin="round"/></svg>
<div class="a" style="left:1857px;top:909px;width:58px;height:1px;background:#e3e4e7;"></div>
<svg style="left:1874px;top:945px;" width="26" height="10" viewBox="0 0 26 10"><circle cx="4" cy="5" r="3" fill="none" stroke="#50535b" stroke-width="1.6"/><circle cx="13" cy="5" r="3" fill="none" stroke="#50535b" stroke-width="1.6"/><circle cx="22" cy="5" r="3" fill="none" stroke="#50535b" stroke-width="1.6"/></svg>
<div class="a" style="left:1905px;top:175px;width:20px;height:87px;background:#50535d;border-radius:7px"></div>
<div class="a" style="left:1911.5px;top:185px;width:6px;height:1.6px;background:#3b404c;"></div>
<div class="a" style="left:1911.5px;top:188px;width:6px;height:1.6px;background:#3b404c;"></div>
<div class="a" style="left:1911.5px;top:191px;width:6px;height:1.6px;background:#3b404c;"></div>
<div class="a" style="left:1911.5px;top:194px;width:6px;height:1.6px;background:#3b404c;"></div>
<div class="a" style="left:1911.5px;top:197px;width:6px;height:1.6px;background:#3b404c;"></div>
<div class="a" style="left:1911.5px;top:200px;width:6px;height:1.6px;background:#3b404c;"></div>
<div class="a" style="left:1911.5px;top:203px;width:6px;height:1.6px;background:#3b404c;"></div>
<div class="a" style="left:1911.5px;top:206px;width:6px;height:1.6px;background:#3b404c;"></div>
<div class="a" style="left:1911.5px;top:209px;width:6px;height:1.6px;background:#3b404c;"></div>
<div class="a" style="left:1911.5px;top:212px;width:6px;height:1.6px;background:#3b404c;"></div>
<div class="a" style="left:1911.5px;top:215px;width:6px;height:1.6px;background:#c8cc5a;"></div>
<div class="a" style="left:1911.5px;top:218px;width:6px;height:1.6px;background:#becb60;"></div>
<div class="a" style="left:1911.5px;top:221px;width:6px;height:1.6px;background:#b5ca67;"></div>
<div class="a" style="left:1911.5px;top:224px;width:6px;height:1.6px;background:#acca6d;"></div>
<div class="a" style="left:1911.5px;top:227px;width:6px;height:1.6px;background:#a2c974;"></div>
<div class="a" style="left:1911.5px;top:230px;width:6px;height:1.6px;background:#99c87a;"></div>
<div class="a" style="left:1911.5px;top:233px;width:6px;height:1.6px;background:#90c881;"></div>
<div class="a" style="left:1911.5px;top:236px;width:6px;height:1.6px;background:#86c787;"></div>
<div class="a" style="left:1911.5px;top:239px;width:6px;height:1.6px;background:#7dc68e;"></div>
<div class="a" style="left:1911.5px;top:242px;width:6px;height:1.6px;background:#74c694;"></div>
<div class="a" style="left:1911.5px;top:245px;width:6px;height:1.6px;background:#6ac59b;"></div>
<div class="a" style="left:1911.5px;top:248px;width:6px;height:1.6px;background:#61c4a1;"></div>
<div class="a" style="left:1911.5px;top:251px;width:6px;height:1.6px;background:#58c4a8;"></div>
<svg style="left:1836px;top:636px;" width="13" height="20" viewBox="0 0 13 20"><path d="M1 1 V17 L5 13 L8 19 L10.5 18 L7.5 12 H12.5 Z" fill="#fff" stroke="#000" stroke-width="1.2" stroke-linejoin="round"/></svg>
<div class="a" style="left:0px;top:977px;width:1920px;height:43px;background:#f6f7f9;"></div>
<div class="a" style="left:0px;top:977px;width:1920px;height:1px;background:#e6e7ea;"></div>
<div class="t" style="left:15px;top:991px;font-size:19px;color:#3d4048;font-weight:normal;">页面: 12/31</div>
<div class="a" style="left:118px;top:988px;width:1px;height:20px;background:#e3e4e7;"></div>
<div class="t" style="left:131px;top:991px;font-size:19px;color:#3d4048;font-weight:normal;">字数: 9958</div>
<div class="a" style="left:228px;top:985px;width:1px;height:28px;background:#e3e4e7;"></div>
<div class="a" style="left:229px;top:983px;width:109px;height:33px;background:#ebeff6;border-radius:2px"></div>
<svg style="left:235px;top:988px;" width="23" height="21" viewBox="0 0 23 21"><path d="M1 1 H22 V18 H13.5 L11.5 20 L9.5 18 H1 Z" fill="none" stroke="#3d4048" stroke-width="1.5" stroke-linejoin="round"/><path d="M7 9 L10.5 12.5 L16 6.5" fill="none" stroke="#3d4048" stroke-width="1.5"/></svg>
<div class="t" style="left:262px;top:990px;font-size:18px;color:#3d4048;font-weight:normal;">拼写检查</div>
<svg style="left:340px;top:998px;" width="8" height="4" viewBox="0 0 8 4"><path d="M0 0 H7 L3.5 4Z" fill="#8a8d98"/></svg>
<div class="a" style="left:356px;top:988px;width:1px;height:20px;background:#e3e4e7;"></div>
<svg style="left:370px;top:988px;" width="23" height="21" viewBox="0 0 23 21"><path d="M1 1 H22 V18 H13.5 L11.5 20 L9.5 18 H1 Z" fill="none" stroke="#3d4048" stroke-width="1.5" stroke-linejoin="round"/><path d="M8 6 L15 13 M15 6 L8 13" stroke="#3d4048" stroke-width="1.4"/></svg>
<div class="t" style="left:398px;top:990px;font-size:18px;color:#3d4048;font-weight:normal;">文档校对</div>
<div class="t" style="left:498px;top:990px;font-size:18px;color:#3d4048;font-weight:normal;">兼容模式</div>
<div class="a" style="left:578px;top:988px;width:1px;height:20px;background:#e3e4e7;"></div>
<div class="t" style="left:597px;top:987px;font-size:25px;color:#3d4048;font-weight:normal;font-family:'Liberation Serif',serif;">T</div>
<div class="t" style="left:611px;top:993px;font-size:17px;color:#3d4048;font-weight:normal;">?</div>
<div class="t" style="left:625px;top:990px;font-size:18px;color:#3d4048;font-weight:normal;">缺失字体</div>
<svg style="left:1206px;top:987px;" width="24" height="22" viewBox="0 0 24 22"><path d="M1 14 Q12 2 23 14 Q12 26 1 14 Z" fill="none" stroke="#3d4048" stroke-width="1.5"/><circle cx="12" cy="14" r="4" fill="none" stroke="#3d4048" stroke-width="1.5"/><path d="M12 0 V3.5 M3 2.5 L5 5 M21 2.5 L19 5" stroke="#3d4048" stroke-width="1.5"/></svg>
<div class="a" style="left:1245px;top:988px;width:1px;height:20px;background:#e3e4e7;"></div>
<div class="a" style="left:1257px;top:981px;width:35px;height:35px;background:#dfe1e6;border-radius:3px"></div>
<svg style="left:1265px;top:988px;" width="21" height="23" viewBox="0 0 21 23"><path d="M1 1 H14 L20 7 V22 H1 Z" fill="#e6e8ee" stroke="#3d4048" stroke-width="1.5" stroke-linejoin="round"/><path d="M5 10 H16 M5 14.5 H16" stroke="#3d4048" stroke-width="1.5"/></svg>
<svg style="left:1304px;top:990px;" width="22" height="21" viewBox="0 0 22 21"><path d="M5 1 H21 M7 7 H21 M5 13 H21 M7 19 H21" stroke="#3d4048" stroke-width="1.5"/><path d="M0 1 H2 M2 7 H4 M0 13 H2 M2 19 H4" stroke="#3d4048" stroke-width="1.5"/></svg>
<svg style="left:1341px;top:988px;" width="24" height="24" viewBox="0 0 24 24"><path d="M1 1 H11 Q12 1.5 12 3 Q12 1.5 13 1 H23 V21 H14 L12 23 L10 21 H1 Z" fill="none" stroke="#3d4048" stroke-width="1.5" stroke-linejoin="round"/><path d="M12 3 V21" stroke="#3d4048" stroke-width="1.5"/></svg>
<svg style="left:1380px;top:988px;" width="24" height="24" viewBox="0 0 24 24"><circle cx="12" cy="12" r="10.8" fill="none" stroke="#3d4048" stroke-width="1.5"/><ellipse cx="12" cy="12" rx="5" ry="10.8" fill="none" stroke="#3d4048" stroke-width="1.5"/><path d="M1.5 8.5 H22.5 M1.5 15.5 H22.5 M12 1 V23" stroke="#3d4048" stroke-width="1.5"/></svg>
<svg style="left:1419px;top:987px;" width="25" height="24" viewBox="0 0 25 24"><path d="M2 20 L3 15 L16 2 L21 7 L8 20 Z" fill="none" stroke="#3d4048" stroke-width="1.5" stroke-linejoin="round"/><path d="M14 4 L19 9 M21 7 Q23 9 21 11 L17 15" fill="none" stroke="#3d4048" stroke-width="1.5"/><path d="M1 22.5 H23" stroke="#3d4048" stroke-width="1.5"/></svg>
<div class="a" style="left:1460px;top:988px;width:1px;height:20px;background:#e3e4e7;"></div>
<svg style="left:1478px;top:988px;" width="23" height="23" viewBox="0 0 23 23"><path d="M1 7 V1 H7 M16 1 H22 V7 M22 16 V22 H16 M7 22 H1 V16" fill="none" stroke="#3d4048" stroke-width="1.5"/><rect x="6.5" y="6.5" width="10" height="10" fill="none" stroke="#3d4048" stroke-width="1.5"/></svg>
<div class="t" style="left:1512px;top:990px;font-size:20px;color:#555c6e;font-weight:normal;">70%</div>
<svg style="left:1557px;top:998px;" width="8" height="4" viewBox="0 0 8 4"><path d="M0 0 H7 L3.5 4Z" fill="#8a8d98"/></svg>
<div class="a" style="left:1582px;top:998px;width:16px;height:3.5px;background:#3a4056;border-radius:1.5px"></div>
<div class="a" style="left:1616px;top:998.3px;width:62px;height:1.6px;background:#444;"></div>
<div class="a" style="left:1690px;top:998.7px;width:133px;height:1px;background:#d4d5d9;"></div>
<div class="a" style="left:1718px;top:995px;width:1px;height:8px;background:#c6c7cb;"></div>
<svg style="left:1674px;top:990px;" width="20" height="20" viewBox="0 0 20 20"><circle cx="10" cy="10" r="8.5" fill="#e9e9ea" stroke="#444" stroke-width="1.5"/></svg>
<svg style="left:1840px;top:991px;" width="17" height="17" viewBox="0 0 17 17"><path d="M8.5 1 V16 M1 8.5 H16" stroke="#3a4056" stroke-width="3" stroke-linecap="round"/></svg>
<svg style="left:1874px;top:988px;" width="23" height="23" viewBox="0 0 23 23"><path d="M1 7 V1 H7 M1 1 L7 7 M16 1 H22 V7 M22 1 L16 7 M22 16 V22 H16 M22 22 L16 16 M7 22 H1 V16 M1 22 L7 16" fill="none" stroke="#2c3038" stroke-width="1.7"/></svg>
<div class="a" style="left:0;top:1020px;width:1920px;height:60px;background:linear-gradient(to right,#24303f 0%,#283445 40%,#283445 73%,#232323 76.5%,#232323 100%)"></div>
<svg style="left:24px;top:1037px;" width="25" height="25" viewBox="0 0 25 25"><path d="M0 3.5 L10 2.2 V11.8 H0 Z M11.5 2 L24.5 0.3 V11.8 H11.5 Z M0 13.2 H10 V22.8 L0 21.5 Z M11.5 13.2 H24.5 V24.7 L11.5 23 Z" fill="#fff"/></svg>
<svg style="left:95px;top:1034px;" width="33" height="33" viewBox="0 0 33 33"><path d="M7 0 H26 L33 7 V26 L26 33 H7 L0 26 V7 Z" fill="#fff"/><path d="M16 16 Q10.5 8 15.5 0 M16 16 Q23 10 33 16.5 M16 16 Q22 22.5 17 33 M16 16 Q9.5 22 0 17" fill="none" stroke="#25303f" stroke-width="1.9"/></svg>
<div class="a" style="left:150px;top:1028px;width:205px;height:43px;background:#ebebec;"></div>
<svg style="left:158px;top:1037px;" width="23" height="24" viewBox="0 0 23 24"><path d="M11.5 4 A8 8 0 1 0 19 15 H14.5 A4 4 0 0 1 7.5 13.5 H19.5 A8 8 0 0 0 11.5 4 Z M7.8 10.5 A4 4 0 0 1 15.5 10.5 Z" fill="#2c8ae6"/><path d="M3 21 Q0 17 5 10 Q12 2 20 1 Q23 1 21 5" fill="none" stroke="#4aa3f0" stroke-width="1.6"/></svg>
<svg style="left:186px;top:1047px;" width="6" height="4" viewBox="0 0 6 4"><path d="M0 4 H6 L3 0Z" fill="#999"/></svg>
<div class="t" style="left:200px;top:1040px;font-size:17px;color:#222;font-weight:normal;">微软云</div>
<div class="a" style="left:355px;top:1028px;width:70px;height:43px;background:#1f87f0;"></div>
<div class="t" style="left:360px;top:1040px;font-size:15px;color:#fff;font-weight:normal;">搜索一下</div>
<div class="a" style="left:436px;top:1032px;width:1px;height:36px;background:#5a6270;"></div>
<div class="a" style="left:440px;top:1032px;width:1px;height:36px;background:#5a6270;"></div>
<svg style="left:477px;top:1032px;" width="36" height="35" viewBox="0 0 36 35"><circle cx="19.7" cy="19" r="14" fill="#52c6f2"/><path d="M12.5 17 A7.2 6.5 0 0 1 27 17 Z" fill="#283445"/><path d="M12.6 21 H35 V26.5 H25.5 A7.5 6.5 0 0 1 12.6 21 Z" fill="#283445"/><path d="M10 33 Q2 34 1.5 28 Q2 20 12 12 Q22 3 29 1.2 Q35 0.5 34.5 8" fill="none" stroke="#f2c319" stroke-width="2.6"/></svg>
<svg style="left:554px;top:1033px;" width="33" height="33" viewBox="0 0 33 33"><circle cx="16" cy="17" r="15" fill="#5cc04a" stroke="#fff" stroke-width="1.6"/><path d="M16 8 A9 9 0 1 0 25 20 H19.5 A4.5 4.5 0 0 1 11.5 18.5 H25.5 A9.5 9.5 0 0 0 16 8 Z M11.8 15 A4.5 4.5 0 0 1 20.5 15 Z" fill="#fff"/><path d="M6 30 Q2 20 14 8 Q24 -1 30 2" fill="none" stroke="#3da03a" stroke-width="1.6"/></svg>
<svg style="left:628px;top:1037px;" width="33" height="26" viewBox="0 0 33 26"><path d="M0 3 Q0 0 3 0 H12 L15 3 H30 Q33 3 33 6 V23 Q33 26 30 26 H3 Q0 26 0 23 Z" fill="#f5c94e"/><path d="M0 7 H33" stroke="#e6ad2e" stroke-width="1.5"/><path d="M8 26 V16 H25 V26 H21 V20 H12 V26 Z" fill="#3f8ed8"/></svg>
<div class="a" style="left:615px;top:1077px;width:61px;height:3px;background:#73a9e0;"></div>
<svg style="left:702px;top:1032px;" width="36" height="36" viewBox="0 0 36 36"><circle cx="18" cy="18" r="17.5" fill="#ef7d16"/><circle cx="18" cy="18" r="14.5" fill="#e56d0c"/><path d="M7 6.5 L11.5 10 L8 12.5 Z M29 6.5 L24.5 10 L28 12.5 Z" fill="#fff"/><ellipse cx="18" cy="17" rx="10" ry="9.5" fill="#0a0a0a"/><path d="M8 10 L7 6 L12 9 Z M28 10 L29 6 L24 9 Z" fill="#fff"/><ellipse cx="13.2" cy="15.3" rx="4.3" ry="2.5" fill="#e58a2a" stroke="#fff" stroke-width="1.3"/><ellipse cx="22.8" cy="15.3" rx="4.3" ry="2.5" fill="#e58a2a" stroke="#fff" stroke-width="1.3"/><circle cx="18" cy="28" r="3.6" fill="#0a0a0a"/><path d="M16.8 26 V30 M19.5 26 L16.8 28 L19.5 30" stroke="#fff" stroke-width="1" fill="none"/></svg>
<div class="a" style="left:690px;top:1077px;width:61px;height:3px;background:#73a9e0;"></div>
<div class="a" style="left:759px;top:1020px;width:73px;height:60px;background:#4d5868;"></div>
<div class="a" style="left:759px;top:1077px;width:73px;height:3px;background:#73a9e0;"></div>
<svg style="left:776px;top:1036px;" width="37" height="28" viewBox="0 0 37 28"><path d="M0.4 0.7 H17 L15.3 27 H8.8 Z M6.6 5.8 L11.7 17.5 L14.6 5.8 Z" fill="#f0141c" fill-rule="evenodd"/><path d="M27 0.7 H36.5 L27 27 H19.7 Z M22.6 5.8 L23.4 17.5 L27.7 5.8 Z" fill="#f2201a" fill-rule="evenodd"/><path d="M21.2 0.7 H27.7 L15.3 27 H8.8 Z" fill="#fa5a22"/></svg>
<svg style="left:1054px;top:1035px;" width="33" height="26" viewBox="0 0 33 26"><circle cx="22" cy="9" r="8" fill="#f5b523"/><path d="M6 25 Q0 25 0 19 Q0 13 6 13 Q8 6 15 6 Q22 6 24 12 Q32 12 32 19 Q32 25 26 25 Z" fill="#e6ebf2"/><path d="M6 25 Q0 25 0 19" fill="none" stroke="#c9d3e0" stroke-width="1"/></svg>
<div class="t" style="left:1122px;top:1028px;font-size:19px;color:#fff;font-weight:normal;font-family:'Liberation Serif',serif;">16%</div>
<div class="t" style="left:1099px;top:1038px;font-size:23px;color:#fff;font-weight:normal;font-family:'Liberation Serif',serif;">33°C</div>
<div class="t" style="left:1160px;top:1040px;font-size:19px;color:#fff;font-weight:normal;">多云</div>
<div class="t" style="left:1095px;top:1052px;font-size:20px;color:#fff;font-weight:normal;font-family:'Liberation Serif',serif;letter-spacing:-1.8px">CPU利用率</div>
<svg style="left:1194px;top:1039px;" width="17" height="23" viewBox="0 0 17 23"><rect x="3.5" y="0.5" width="10" height="5.5" fill="#ddd"/><rect x="5" y="2" width="2" height="1.5" fill="#666"/><rect x="10" y="2" width="2" height="1.5" fill="#666"/><rect x="1" y="6" width="14" height="16" rx="1" fill="#3fae2e"/><path d="M8 9 V20 M5 13 L8 9 L11 13 M5 16 L8 18 L11 15" stroke="#9fe08a" stroke-width="1" fill="none"/></svg>
<svg style="left:1224px;top:1038px;" width="25" height="25" viewBox="0 0 25 25"><circle cx="12.5" cy="12.5" r="12" fill="#ee1111"/><ellipse cx="12.5" cy="11.5" rx="7" ry="6" fill="#0a0a0a"/><path d="M5 8 L4.5 4 L8.5 6.5 Z M20 8 L20.5 4 L16.5 6.5 Z" fill="#fff"/><ellipse cx="9.3" cy="10.5" rx="3" ry="1.6" fill="#e89a4a" stroke="#fff" stroke-width="0.9"/><ellipse cx="15.7" cy="10.5" rx="3" ry="1.6" fill="#e89a4a" stroke="#fff" stroke-width="0.9"/><rect x="11" y="19" width="3" height="2" fill="#ddd"/></svg>
<svg style="left:1260px;top:1039px;" width="23" height="23" viewBox="0 0 23 23"><rect x="4" y="0" width="15" height="8" rx="1" fill="#d0d4da"/><rect x="6.5" y="2.5" width="3" height="3" fill="#555"/><rect x="13.5" y="2.5" width="3" height="3" fill="#555"/><rect x="1" y="8" width="21" height="14.5" rx="3" fill="#2f9be3"/><path d="M11.5 10 V20 M8.5 13 L11.5 17 M14.5 12 L11.5 16" stroke="#1a6ab0" stroke-width="1.4" fill="none"/></svg>
<svg style="left:1296px;top:1038px;" width="25" height="25" viewBox="0 0 25 25"><rect x="0" y="0" width="24" height="24" rx="3.5" fill="#3a8fe8"/><path d="M8 5 V16 Q8 19.5 12 19.5 H17 M5 9 H18 M6 5 L8 3 M16 5 L18 3" fill="none" stroke="#fff" stroke-width="3.2"/><rect x="13.5" y="13.5" width="10.5" height="10.5" rx="2.5" fill="#2aa83a"/><path d="M15.8 18.5 L18.2 21 L22 16.5" stroke="#fff" stroke-width="1.6" fill="none"/></svg>
<svg style="left:1333px;top:1039px;" width="24" height="23" viewBox="0 0 24 23"><path d="M12 0.5 L23 3.5 Q23 17 12 22.5 Q1 17 1 3.5 Z" fill="#2a7ae4"/><path d="M12 3 L20.5 5.3 Q20.5 15.5 12 20 Q3.5 15.5 3.5 5.3 Z" fill="#fff"/><path d="M6 9 L12 15 L18 9" fill="none" stroke="#2a7ae4" stroke-width="2.3"/></svg>
<svg style="left:1372px;top:1041px;" width="20" height="20" viewBox="0 0 20 20"><path d="M1.5 18 A16.5 16.5 0 0 1 18 1.5 M5.5 18 A12.5 12.5 0 0 1 18 5.5 M9.5 18 A8.5 8.5 0 0 1 18 9.5" fill="none" stroke="#e8e8e8" stroke-width="1.3"/><circle cx="17" cy="17" r="1.6" fill="#fff"/></svg>
<svg style="left:1405px;top:1039px;" width="23" height="23" viewBox="0 0 23 23"><rect x="0" y="0" width="23" height="23" rx="2" fill="#2a3436"/><path d="M2 12 Q7 4 22 3 V20 Q9 21 2 12 Z" fill="#76b900"/><path d="M6 12 Q10 7 16 8 Q18 11 15 13 Q11 14 9 11" fill="none" stroke="#4a7a00" stroke-width="1"/></svg>
<svg style="left:1442px;top:1040px;" width="21" height="23" viewBox="0 0 21 23"><ellipse cx="10.5" cy="8" rx="6.5" ry="7.5" fill="#111"/><ellipse cx="10.5" cy="15" rx="7.5" ry="7" fill="#111"/><ellipse cx="10.5" cy="16" rx="5" ry="5.5" fill="#fff"/><path d="M3 11.5 H18 L14 14 H7Z" fill="#e0101a"/><ellipse cx="10.5" cy="8.5" rx="3" ry="1.5" fill="#f5b800"/><path d="M2 22 H8 M13 22 H19" stroke="#f5b800" stroke-width="2.2"/></svg>
<svg style="left:1475px;top:1040px;" width="26" height="19" viewBox="0 0 26 19"><path d="M2 0.5 V4 M6 0.5 V4 M0.8 4 H7.2 V8 Q7.2 10.5 4 10.5 Q0.8 10.5 0.8 8 Z M4 10.5 V17" fill="none" stroke="#fff" stroke-width="1.2"/><rect x="6" y="3.5" width="18" height="13" fill="none" stroke="#fff" stroke-width="1.2"/><rect x="6.5" y="9" width="17" height="7" fill="#fff"/><rect x="24" y="8" width="1.6" height="4" fill="#fff"/></svg>
<svg style="left:1515px;top:1038px;" width="19" height="25" viewBox="0 0 19 25"><ellipse cx="9.5" cy="12.5" rx="9.5" ry="12.5" fill="#1c7ef0"/><path d="M5.5 8 L13 15 L9.5 18.5 V6.5 L13 10 L5.5 17" fill="none" stroke="#fff" stroke-width="1.4"/></svg>
<svg style="left:1553px;top:1038px;" width="20" height="25" viewBox="0 0 20 25"><rect x="3" y="0.7" width="9" height="6" fill="none" stroke="#ddd" stroke-width="1.2"/><path d="M1 6.5 H14 V23.5 H1 Z" fill="none" stroke="#ddd" stroke-width="1.2"/><path d="M12 21 L14.5 23.5 L19 18" fill="none" stroke="#bbb" stroke-width="1.2"/></svg>
<svg style="left:1584px;top:1038px;" width="24" height="25" viewBox="0 0 24 25"><circle cx="12" cy="12.5" r="11.5" fill="#f4d21a"/><path d="M4 5 A11.5 11.5 0 0 1 23.3 11.5 Q15 5.5 4 5 Z M20 20 A11.5 11.5 0 0 1 0.7 13.5 Q9 19.5 20 20 Z" fill="#2e9a35"/><path d="M12 7 V18 M6.5 12.5 H17.5" stroke="#2e9a35" stroke-width="3.4"/></svg>
<svg style="left:1620px;top:1041px;" width="24" height="19" viewBox="0 0 24 19"><path d="M1 6 H5 L11 1 V18 L5 13 H1 Z" fill="none" stroke="#e8e8e8" stroke-width="1.3" stroke-linejoin="round"/><path d="M14 6 Q16 9.5 14 13 M17 3.5 Q21 9.5 17 15.5 M20 1 Q26 9.5 20 18" fill="none" stroke="#bbb" stroke-width="1.2"/></svg>
<svg style="left:1658px;top:1039px;" width="18" height="22" viewBox="0 0 18 22"><rect x="1.2" y="5.5" width="15.6" height="9.5" fill="none" stroke="#fff" stroke-width="2"/><path d="M9 0 V22" stroke="#fff" stroke-width="2"/></svg>
<svg style="left:1698px;top:1038px;" width="25" height="25" viewBox="0 0 25 25"><rect x="0" y="0" width="25" height="25" rx="4" fill="#2f8cf2"/><circle cx="11.5" cy="11.5" r="6.5" fill="none" stroke="#fff" stroke-width="2.6"/><path d="M15 15 L19 19" stroke="#fff" stroke-width="2.6"/><circle cx="19" cy="19" r="2.6" fill="#3ec35a"/></svg>
<div class="t" style="left:1751px;top:1029px;font-size:19px;color:#fff;font-weight:normal;">16:14 周一</div>
<div class="t" style="left:1749px;top:1052px;font-size:20px;color:#fff;font-weight:normal;">2022/9/12</div>
<svg style="left:1869px;top:1039px;" width="25" height="22" viewBox="0 0 25 22"><rect x="0" y="0" width="24" height="19" fill="#fff"/><path d="M11 5 L17 9.5 L11 14 Z" fill="#111"/></svg>
<div class="a" style="left:1884px;top:1049px;width:20px;height:20px;background:#d8141b;"></div>
<div class="t" style="left:1890px;top:1052px;font-size:14px;color:#fff;font-weight:normal;">6</div>
<div class="a" style="left:1913px;top:1020px;width:2px;height:60px;background:#9a9ca2;"></div>
<div class="a" style="left:2px;top:8px;width:14px;height:88px;border-radius:7px;border:1px solid rgba(255,255,255,0.35);box-shadow:0 2px 4px rgba(0,0,0,0.08)"></div>
<div class="a" style="left:3px;top:9px;width:12px;height:86px;background:rgba(0,0,0,0.58);border-radius:6px"></div>
<div class="a" style="left:4px;top:82px;width:10px;height:1.2px;background:#5fae5f;"></div>
<div class="a" style="left:4px;top:85px;width:10px;height:1.2px;background:#5fae5f;"></div>
<div class="a" style="left:4px;top:88px;width:10px;height:1.2px;background:#5fae5f;"></div>
<div class="a" style="left:4px;top:91px;width:10px;height:1.2px;background:#5fae5f;"></div>
</body></html>
